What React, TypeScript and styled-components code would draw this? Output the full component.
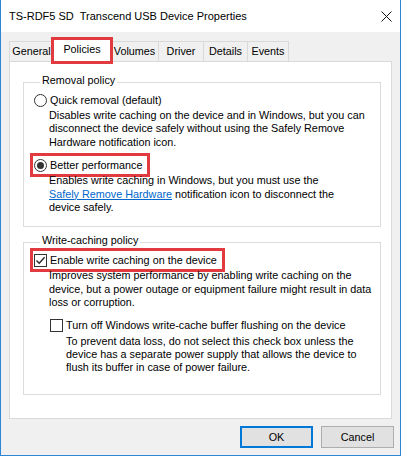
import styled, { createGlobalStyle, css } from 'styled-components';

const GlobalStyle = createGlobalStyle`
  html, body {
    margin: 0;
    padding: 0;
    background: #fff;
  }
  body {
    font-family: 'Liberation Sans', Arial, sans-serif;
    font-size: 10.8px;
    color: #000;
  }
`;

const MARK = '#e23b3f';

const Window = styled.div`
  box-sizing: border-box;
  width: 401px;
  height: 456px;
  display: flex;
  flex-direction: column;
  border: 1px solid #2b87d6;
  border-top: none;
  background: #f0f0f0;
`;

const TitleBar = styled.div`
  flex: none;
  height: 32px;
  display: flex;
  align-items: center;
  justify-content: space-between;
  padding: 0 8px 0 8px;
  background: #fff;
  font-size: 11px;
`;

const Title = styled.span`
  white-space: pre;
  line-height: 14px;
`;

const Body = styled.div`
  flex: 1;
  display: flex;
  flex-direction: column;
  padding: 7px 8px 0 8px;
`;

const TabRow = styled.div`
  display: flex;
  align-items: flex-end;
  height: 22px;
`;

const Tab = styled.div<{ $w: number; $active?: boolean }>`
  box-sizing: border-box;
  width: ${(p) => p.$w}px;
  height: 20px;
  margin-right: -1px;
  display: flex;
  align-items: center;
  justify-content: center;
  border: 1px solid #d9d9d9;
  border-bottom: none;
  background: #f0f0f0;
  line-height: 13px;

  ${(p) =>
    p.$active &&
    css`
      position: relative;
      z-index: 1;
      height: 23px;
      margin-bottom: -1px;
      padding-bottom: 3px;
      background: #fff;
      outline: 3px solid ${MARK};
      outline-offset: -1px;
    `}
`;

const Panel = styled.div`
  flex: 1;
  display: flex;
  flex-direction: column;
  gap: 7px;
  border: 1px solid #d9d9d9;
  background: #fff;
  padding: 12px 10px 0 13px;
`;

const Group = styled.fieldset<{ $bottom: number }>`
  margin: 0;
  min-inline-size: 0;
  border: 1px solid #dcdcdc;
  padding: 1px 0 ${(p) => p.$bottom}px 10px;
  display: flex;
  flex-direction: column;
`;

const Legend = styled.legend`
  margin-left: 6px;
  padding: 0 2px 4px;
  line-height: 13px;
`;

const Choice = styled.label<{ $marked?: boolean; $indent?: number }>`
  align-self: flex-start;
  display: inline-flex;
  align-items: center;
  gap: 3px;
  height: 16px;
  margin-left: ${(p) => p.$indent ?? 0}px;
  margin-top: ${(p) => (p.$indent ? 9 : 0)}px;
  line-height: 13px;
  white-space: nowrap;

  ${(p) =>
    p.$marked &&
    css`
      outline: 3px solid ${MARK};
      outline-offset: 1px;
      padding-right: 4px;
    `}
`;

const Radio = styled.span<{ $on?: boolean }>`
  box-sizing: border-box;
  width: 13px;
  height: 13px;
  border: 1px solid #333;
  border-radius: 50%;
  background: #fff;
  display: flex;
  align-items: center;
  justify-content: center;

  &::after {
    content: '';
    width: 7px;
    height: 7px;
    border-radius: 50%;
    background: ${(p) => (p.$on ? '#333' : 'transparent')};
  }
`;

const Box = styled.span`
  box-sizing: border-box;
  width: 13px;
  height: 13px;
  border: 1px solid #333;
  background: #fff;
  display: flex;
  align-items: center;
  justify-content: center;
`;

const Desc = styled.div<{ $indent?: number }>`
  padding-left: ${(p) => p.$indent ?? 15}px;
  margin-top: 1px;
  line-height: 13.4px;
  white-space: nowrap;

  & + ${Choice} {
    margin-top: 8px;
  }
`;

const Link = styled.span`
  color: #0066cc;
  text-decoration: underline;
`;

const Footer = styled.div`
  flex: none;
  display: flex;
  justify-content: flex-end;
  gap: 8px;
  padding: 7px 6px 7px 0;
`;

const Button = styled.button<{ $default?: boolean }>`
  box-sizing: border-box;
  width: 73px;
  height: 22px;
  margin: 0;
  padding: 0;
  font: inherit;
  color: #000;
  background: #e1e1e1;
  border: 1px solid #adadad;

  ${(p) =>
    p.$default &&
    css`
      border: 2px solid #0078d7;
    `}
`;

const CloseIcon = () => (
  <svg width="11" height="11" viewBox="0 0 11 11">
    <path d="M0.5 0.5 L10.5 10.5 M10.5 0.5 L0.5 10.5" stroke="#111" strokeWidth="1" />
  </svg>
);

const Check = () => (
  <svg width="11" height="11" viewBox="0 0 11 11">
    <path d="M1.5 5.5 L4.2 8.3 L9.6 2.2" fill="none" stroke="#222" strokeWidth="1.3" />
  </svg>
);

const tabs = [
  { name: 'General', w: 45 },
  { name: 'Policies', w: 58, active: true },
  { name: 'Volumes', w: 49 },
  { name: 'Driver', w: 46 },
  { name: 'Details', w: 45 },
  { name: 'Events', w: 42 },
];

export default function App() {
  return (
    <>
      <GlobalStyle />
      <Window>
        <TitleBar>
          <Title>TS-RDF5 SD  Transcend USB Device Properties</Title>
          <CloseIcon />
        </TitleBar>
        <Body>
          <TabRow>
            {tabs.map((t) => (
              <Tab key={t.name} $w={t.w} $active={t.active}>
                {t.name}
              </Tab>
            ))}
          </TabRow>
          <Panel>
            <Group $bottom={12}>
              <Legend>Removal policy</Legend>
              <Choice>
                <Radio />
                Quick removal (default)
              </Choice>
              <Desc>
                Disables write caching on the device and in Windows, but you can
                <br />
                disconnect the device safely without using the Safely Remove
                <br />
                Hardware notification icon.
              </Desc>
              <Choice $marked>
                <Radio $on />
                Better performance
              </Choice>
              <Desc>
                Enables write caching in Windows, but you must use the
                <br />
                <Link>Safely Remove Hardware</Link> notification icon to disconnect the
                <br />
                device safely.
              </Desc>
            </Group>
            <Group $bottom={19}>
              <Legend>Write-caching policy</Legend>
              <Choice $marked>
                <Box>
                  <Check />
                </Box>
                Enable write caching on the device
              </Choice>
              <Desc>
                Improves system performance by enabling write caching on the
                <br />
                device, but a power outage or equipment failure might result in data
                <br />
                loss or corruption.
              </Desc>
              <Choice $indent={16}>
                <Box />
                Turn off Windows write-cache buffer flushing on the device
              </Choice>
              <Desc $indent={32}>
                To prevent data loss, do not select this check box unless the
                <br />
                device has a separate power supply that allows the device to
                <br />
                flush its buffer in case of power failure.
              </Desc>
            </Group>
          </Panel>
        </Body>
        <Footer>
          <Button $default>OK</Button>
          <Button>Cancel</Button>
        </Footer>
      </Window>
    </>
  );
}
